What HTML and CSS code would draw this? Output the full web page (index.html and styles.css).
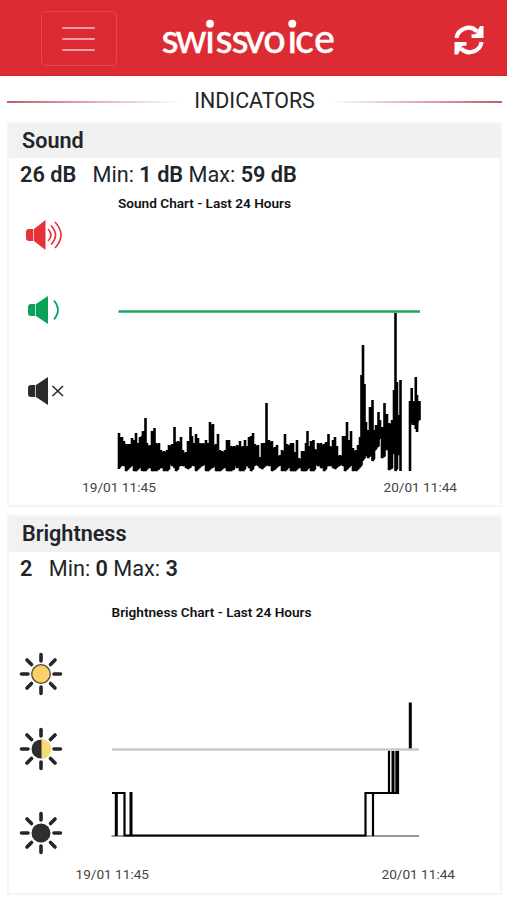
FILE: index.html
```html
<!DOCTYPE html>
<html lang="en">
<head>
    <meta charset="UTF-8">
    <meta name="viewport" content="width=device-width, initial-scale=1.0">
    <title>swissvoice</title>
    <link rel="stylesheet" href="styles.css">
</head>
<body>
    <header class="navbar">
        <button class="menu-btn" aria-label="Menu"><span></span><span></span><span></span></button>
        <svg class="logo" width="180" height="50" viewBox="0 0 180 50">
            <clipPath id="xHeight"><rect y="16" width="180" height="33"/></clipPath>
            <text clip-path="url(#xHeight)" y="38.500" x="1.500 15.500 45.200 55.500 71.500 84.500 103.300 127.500 135 154">swissvoice</text>
            <circle cx="50" cy="9.800" r="4"/>
            <circle cx="132.300" cy="9.800" r="4"/>
        </svg>
        <button class="refresh-btn" aria-label="Refresh">
            <svg width="30" height="30" viewBox="0 0 30 30">
                <path class="arc" d="M2.500 13A12 12 0 0 1 23 6.500M27.500 17A12 12 0 0 1 7 23.500"/>
                <path d="M29.500 1V13H17.500V9.500L22 9L26 1ZM.500 29.500V17H12.500V20.500L8 21L4 29.500Z"/>
            </svg>
        </button>
    </header>

    <h1 class="section-title"><span>INDICATORS</span></h1>

    <section class="panel sound">
        <h2>Sound</h2>
        <p class="stats"><b class="now">26 dB</b> Min: <b>1 dB</b> Max: <b>59 dB</b></p>
        <div class="panel-body">
            <div class="levels">
                <svg class="speaker loud" width="40" height="32" viewBox="0 0 40 32">
                    <path d="M5 10H9.300V22H5Q2 22 2 19V13Q2 10 5 10ZM10 10L21.500 1V31L10 22Z"/>
                    <path class="wave" d="M24 10Q30 16 24 22M27 6.500Q36 16 27 25.500M31 3Q43 16 31 29"/>
                </svg>
                <svg class="speaker normal" width="40" height="32" viewBox="0 0 40 32">
                    <path d="M7 10H11.300V22H7Q4 22 4 19V13Q4 10 7 10ZM12 10L24 2V30L12 22Z"/>
                    <path class="wave" d="M30 6.500Q38 16 30 25.500"/>
                </svg>
                <svg class="speaker mute" width="40" height="32" viewBox="0 0 40 32">
                    <path d="M7 10H11.300V22H7Q4 22 4 19V13Q4 10 7 10ZM12 10L24 2V30L12 22Z"/>
                    <path class="wave" d="M28.500 11L39 21M39 11L28.500 21"/>
                </svg>
            </div>
            <svg class="chart" width="430" height="315" viewBox="70 190 430 315">
                <text class="chart-title" x="118" y="207.500" textLength="173" lengthAdjust="spacingAndGlyphs">Sound Chart - Last 24 Hours</text>
                <polyline id="soundNight" class="noise"/>
                <polyline id="soundMorning" class="noise"/>
                <path class="limit" d="M118.500 311.500H420"/>
                <text class="tick" x="82" y="492" textLength="74" lengthAdjust="spacingAndGlyphs">19/01 11:45</text>
                <text class="tick" x="383.500" y="492" textLength="73.500" lengthAdjust="spacingAndGlyphs">20/01 11:44</text>
            </svg>
        </div>
    </section>

    <section class="panel brightness">
        <h2>Brightness</h2>
        <p class="stats"><b class="now">2</b> Min: <b>0</b> Max: <b>3</b></p>
        <div class="panel-body">
            <div class="levels">
                <svg class="sun bright" width="44" height="44" viewBox="-22 -22 44 44">
                    <path class="rays" d="M0-19.500V-13M0 13V19.500M-19.500 0H-13M13 0H19.500M-14-14L-9.500-9.500M9.500 9.500L14 14M14-14L9.500-9.500M-9.500 9.500L-14 14"/>
                    <circle r="9.300"/>
                </svg>
                <svg class="sun dim" width="44" height="44" viewBox="-22 -22 44 44">
                    <path class="rays" d="M0-19.500V-13M0 13V19.500M-19.500 0H-13M13 0H19.500M-14-14L-9.500-9.500M9.500 9.500L14 14M14-14L9.500-9.500M-9.500 9.500L-14 14"/>
                    <circle r="9.500"/>
                    <path class="half" d="M.500-9.800A9.800 9.800 0 0 1 .500 9.800Z"/>
                </svg>
                <svg class="sun dark" width="44" height="44" viewBox="-22 -22 44 44">
                    <path class="rays" d="M0-19.500V-13M0 13V19.500M-19.500 0H-13M13 0H19.500M-14-14L-9.500-9.500M9.500 9.500L14 14M14-14L9.500-9.500M-9.500 9.500L-14 14"/>
                    <circle r="9.500"/>
                </svg>
            </div>
            <svg class="chart" width="430" height="307" viewBox="70 584 430 307">
                <text class="chart-title" x="111.500" y="617" textLength="200" lengthAdjust="spacingAndGlyphs">Brightness Chart - Last 24 Hours</text>
                <path class="base" d="M111.500 836H419"/>
                <path class="steps" d="M112 793H124.500V835.500H365.500V793H389V750.500M373 793V836M389 793H398V750.500"/>
                <path class="steps thick" d="M116.300 792V836M131 792V836M393 751V793.500M396.800 751V793.500M410.300 702.500V749"/>
                <path class="threshold" d="M112 749.500H419"/>
                <text class="tick" x="75.500" y="879" textLength="73.500" lengthAdjust="spacingAndGlyphs">19/01 11:45</text>
                <text class="tick" x="381.500" y="879" textLength="73.500" lengthAdjust="spacingAndGlyphs">20/01 11:44</text>
            </svg>
        </div>
    </section>

    <script src="script.js"></script>
</body>
</html>
```
FILE: styles.css
```css
body {
    margin: 0;
    font-family: Roboto, "Liberation Sans", sans-serif;
    color: #212529;
    background-color: #fff;
    height: 900px;
    overflow: hidden;
}
.navbar {
    display: flex;
    align-items: center;
    box-sizing: border-box;
    height: 76px;
    padding: 0 23px 0 41px;
    background-color: #dc2b33;
    border-bottom: 1px solid #c9262f;
}
button {
    background: none;
    border: none;
    padding: 0;
}
.menu-btn {
    display: flex;
    flex-direction: column;
    align-items: center;
    justify-content: center;
    gap: 9px;
    box-sizing: border-box;
    width: 76px;
    height: 55px;
    margin-top: 2px;
    border: 1px solid #e34850;
    border-radius: 5px;
}
.menu-btn span {
    width: 33px;
    height: 2px;
    margin-right: 2px;
    border-radius: 1px;
    background-color: #f2a0a4;
}
.logo {
    margin-left: 43px;
    margin-top: 3px;
    fill: #fff;
}
.logo text {
    font-family: Lato, sans-serif;
    font-weight: 500;
    font-size: 39.5px;
    stroke: #fff;
    stroke-width: 0.3;
}
.refresh-btn {
    height: 30px;
    margin-top: 4px;
    margin-left: auto;
}
.refresh-btn svg {
    display: block;
    fill: #fff;
}
.refresh-btn .arc {
    fill: none;
    stroke: #fff;
    stroke-width: 4.2;
}
.section-title {
    display: flex;
    align-items: center;
    gap: 13px;
    height: 46px;
    margin: 0 5px 0 7px;
    padding-top: 2px;
    box-sizing: border-box;
    font-size: 21.4px;
    font-weight: 400;
}
.section-title::before,
.section-title::after {
    content: "";
    flex: 1;
    height: 2px;
    margin-top: 3px;
    background: linear-gradient(to right, #bd6067, #fff);
}
.section-title::after {
    background: linear-gradient(to left, #bd6067, #fff);
}
.panel {
    box-sizing: border-box;
    margin: 0 5px 8px 7px;
    border: 2px solid #f5f5f5;
}
.sound {
    height: 385px;
}
.brightness {
    height: 380px;
}
.panel h2 {
    height: 34px;
    margin: 0;
    padding-left: 13px;
    font-size: 21.6px;
    line-height: 33px;
    font-weight: 600;
    background-color: #f1f1f1;
}
.stats {
    height: 32px;
    margin: 0;
    padding-left: 11px;
    font-size: 21.7px;
    line-height: 33px;
    white-space: nowrap;
}
.brightness h2 {
    height: 35px;
}
.stats b {
    font-weight: 600;
}
.stats .now {
    margin-right: 11px;
}
.panel-body {
    display: flex;
}
.levels {
    display: flex;
    flex-direction: column;
    width: 61px;
}
.sound .levels {
    padding: 29px 0 0 15px;
    width: 46px;
    gap: 46px;
}
.brightness .levels {
    padding: 68px 0 0 10px;
    width: 51px;
    gap: 36px;
}
.loud {
    fill: #e4313a;
    stroke: #e4313a;
}
.normal {
    margin-top: -3px;
    fill: #0aa15b;
    stroke: #0aa15b;
}
.mute {
    margin-top: 3px;
    fill: #2b2a2d;
    stroke: #2b2a2d;
}
.speaker {
    stroke-width: 0;
}
.speaker .wave {
    fill: none;
    stroke-width: 1.6;
}
.sun {
    fill: #2e2d31;
}
.rays {
    stroke: #25252a;
    stroke-width: 3.6;
    stroke-linecap: round;
}
.bright circle {
    fill: #fbd269;
    stroke: #504534;
    stroke-width: 1.3;
}
.dim {
    margin-top: -5px;
}
.dark {
    margin-top: 4px;
}
.half {
    fill: #f7da78;
}
.chart {
    flex: none;
}
.chart-title {
    font-size: 13.2px;
    font-weight: 600;
    fill: #111;
}
.tick {
    font-size: 13.7px;
    fill: #444;
}
.noise {
    fill: none;
    stroke: #000;
    stroke-width: 2.6;
    stroke-linejoin: bevel;
}
.limit {
    stroke: #16a765;
    stroke-width: 2.6;
}
.steps {
    fill: none;
    stroke: #000;
    stroke-width: 2.2;
}
.thick {
    stroke-width: 3;
}
.base {
    stroke: #333;
    stroke-width: 1;
}
.threshold {
    stroke: #c9c9c9;
    stroke-width: 2.4;
}
```
FILE: script.js
```js
// x, peak, low (low defaults to the quiet floor)
const night = [
    [119,433],[120,437],[122,437],[124,441],[126,444],[128,444],[130,444],[132,438],
    [134,440],[136,433],[138,443],[140,437],[142,436],[143,431],[145.5,418],[147,443],
    [150,445],[152,431],[154.5,428],[156,443],[159,443],[161,450],[164,451],[167,450],
    [169,445],[172,444],[174.5,427],[176,442],[178,441],[181,437],[183,450],[186,452],
    [188,441],[190.5,427],[192,436],[194,443],[196,434],[198,438],[200,443],[203,443],
    [206,440],[208,443],[210,422],[213,424],[216,444],[218,434],[220,450],[222,451],
    [225,450],[227,440],[229,440],[231,446],[234,446],[237,445],[240,441],[243,446],
    [245,440],[247,446],[249,437],[251,436],[253,433],[255,444],[258,445],[260,457],
    [262,443],[264,443],[266.5,403],[269,440],[272,441],[275,447],[277,445],[280,455],
    [282,450],[285,434],[287,444],[289,445],[291,443],[293,443],[295,452],[297,440],
    [299,458],[302,451],[304,451],[306,443],[307.5,431],[309,446],[311,441],[313.5,440],
    [315,449],[318,443],[321,443],[324,444],[326,442],[328.5,434],[330,446],[333,440],
    [335,437],[337,446],[340,455],[343,436],[345,436],[347,422],[349,440],[351,431],
    [353,448],[356,450],[358,445],[360,437,467],[361.5,375,462],[363,345,460],
    [364.5,384,453],[366,422,456],[368,430,458],[370,407,454],[372.5,400,461],
    [374,430,451],[376,425,448],[378.5,412,440],[380,420,438],[382,427,458],
    [384.5,403,447],[387,414,450],[389,423,470],[392,420,454],[394,390,454],
    [395.5,313,471],[397,382,440],[399,415,455],[400.5,380,471]
];
const morning = [
    [410,471,471],[410,401,424],[411.7,388,418],[413,401,425],[414.5,402,420],
    [415.8,377,429],[417,395,432],[418,402,421],[419.5,401,420]
];
const floors = [469, 466, 471, 467, 468, 471, 465, 471];

function drawNoise(id, samples) {
    const points = [];
    samples.forEach(([x, peak, low], i) => {
        const bottom = low || floors[(i * 3 + (i >> 2)) % floors.length];
        points.push(`${x},${peak}`, `${x},${bottom}`);
        const next = samples[i + 1];
        if (next && next[0] - x > 1.2) {
            const top = Math.max(peak, next[1]) + 1;
            const step = (next[0] - x) / 3;
            for (let k = 1; k < 3; k++) {
                const px = x + step * k;
                points.push(`${px},${bottom - 2}`, `${px},${top}`, `${px},${bottom - 2}`);
            }
            points.push(`${next[0]},${bottom - 2}`);
        }
    });
    document.getElementById(id).setAttribute("points", points.join(" "));
}

drawNoise("soundNight", night);
drawNoise("soundMorning", morning);
```
